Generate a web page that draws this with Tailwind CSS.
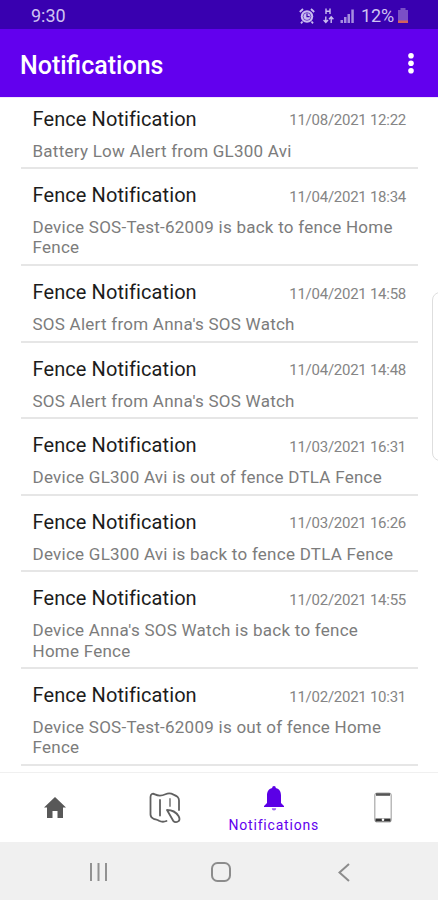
<!DOCTYPE html>
<html lang="en">
<head>
<meta charset="utf-8">
<title>Notifications</title>
<script src="https://cdn.jsdelivr.net/npm/@tailwindcss/browser@4"></script>
</head>
<body class="bg-white">
<div class="relative flex h-[900px] w-[438px] flex-col overflow-hidden bg-white font-[Roboto,sans-serif]">
  <div class="flex h-[29px] shrink-0 items-center justify-between bg-[#3900b0] pl-[31px] pr-[29px] pt-[2px] text-[#cfc3f2]">
    <span class="text-[18px] leading-[28px]">9:30</span>
    <div class="flex items-center">
      <svg class="mr-[8px]" width="16" height="16" viewBox="0 0 16 16" fill="none" stroke="#c9bcf0"><circle cx="8" cy="8.5" r="6.2" fill="#c9bcf0" stroke="none"/><path d="M.8 4 4 1M15.2 4 12 1M3.5 13.5 2 15.4M12.5 13.5l1.5 1.9" stroke-width="1.8"/><circle cx="8" cy="8.5" r="3.9" stroke="#3900b0" stroke-width=".6"/><path d="M8 5.5v3.2h2.6" stroke="#3900b0" stroke-width="1.2"/></svg>
      <svg class="mr-[6px]" width="11" height="16" viewBox="0 0 11 16" fill="none" stroke="#c9bcf0" stroke-width="1.4"><path d="M3 .5v5.5M7 .5v5.5M3 3.2h4M2.8 8.5v6M.6 12l2.2 2.4L5 12M8.2 15V9M6 11.2l2.2-2.4 2.2 2.4"/></svg>
      <svg class="mr-[6px]" width="15" height="16" viewBox="0 0 15 16" fill="#c9bcf0"><path opacity=".75" d="M.5 12h2.500v3H.5zM4 9h2.500v6H4z"/><path opacity=".75" d="M7.500 6H10v9H7.500z"/><path opacity=".75" d="M11.300 1.500h2.500V15h-2.500z"/></svg>
      <span class="mr-[3px] text-[18px] leading-[28px] tracking-[-0.1px]">12%</span>
      <svg width="12" height="16" viewBox="0 0 12 16"><path d="M3.5 0h5v2H11v11H1V2h2.500z" fill="#7a50c6"/><path d="M1 12.500h10V15H1z" fill="#d4605c"/></svg>
    </div>
  </div>
  <header class="flex h-[68px] shrink-0 items-center justify-between bg-[#6200ee] pl-[20px] pr-[24px] text-white">
    <h1 class="pt-[5px] text-[25px] font-medium leading-[28px]">Notifications</h1>
    <svg class="mt-[2px]" width="6" height="22" viewBox="0 0 6 22" fill="#fff"><circle cx="3" cy="2.800" r="2.800"/><circle cx="3" cy="10.300" r="2.800"/><circle cx="3" cy="17.800" r="2.800"/></svg>
  </header>
  <main class="min-h-0 flex-1 overflow-hidden border-t border-[#f0e6fc] pl-[21px] pr-[20px]">
    <ul id="list" class="-mt-[5.400px]"></ul>
  </main>
  <nav class="grid h-[70px] shrink-0 grid-cols-4 items-center border-t border-[#f0f0f0] bg-white">
    <div class="flex justify-center"><svg width="22" height="21" viewBox="0 0 22 21" fill="#585858"><path d="M11 0 22 10.500h-3V21h-5.500v-7h-5v7H3V10.500H0z"/></svg></div>
    <div class="flex justify-center pl-[1px]"><svg width="32" height="32" viewBox="0 0 32 32" fill="none" stroke="#606060" stroke-width="1.800" stroke-linecap="round" stroke-linejoin="round"><path d="M17.500 29c-3 1.200-5.500.8-7.500-.3-2-1.400-4-1.200-5.500-2C2.500 25.800 1.500 24.500 1.500 22.500V5c0-3 2.200-4 4.500-2.600 4 2 7.500 1.200 10.500-.2 2.500-1.100 5.500-1 8 .4 3.500 1.500 5.500 2.400 5.500 5.900V18M11 8v15.500"/><path d="M21 7v7" stroke="#8a8a8a"/><path d="M18 18c4 0 9 2 11.500 6 1 1.800 1.600 3.600.2 5-1.400 1.500-4 1.500-5.500-.2z"/></svg></div>
    <div class="flex flex-col items-center gap-[6px] pt-[3px] text-[#6200ee]">
      <svg width="20" height="25" viewBox="0 0 20 25" fill="#5b00e6"><path d="M10 0c1.200 0 1.800.8 1.800 2C15.600 2.800 17 6 17 9.500V17l3 3v1H0v-1l3-3V9.500C3 6 4.400 2.800 8.200 2c0-1.200.6-2 1.800-2z"/><path opacity=".6" d="M7.800 22.200h4.400a2.200 2.200 0 0 1-4.400 0z"/></svg>
      <span class="text-[14px] leading-[16px] tracking-[0.800px]">Notifications</span>
    </div>
    <div class="flex justify-center"><svg width="18" height="31" viewBox="0 0 18 31" fill="none"><rect x=".8" y="1" width="16.400" height="29" rx="2.500" stroke="#a9a9a9" stroke-width="1.200"/><path d="M2 2.500h14" stroke="#555" stroke-width="2.600"/><path d="M1.500 28h15" stroke="#333" stroke-width="3"/><circle cx="9" cy="27.700" r="1.300" fill="#fff"/></svg></div>
  </nav>
  <footer class="flex h-[58px] shrink-0 items-center bg-[#f0f0f0] pl-[89px] pt-[2px]">
    <svg class="mr-[103px]" width="19" height="18" viewBox="0 0 19 18" stroke="#929292" stroke-width="2"><path d="M2 0v18M9.500 0v18M17 0v18"/></svg>
    <svg class="mr-[107px]" width="20" height="20" viewBox="0 0 20 20" fill="none" stroke="#8c8c8c" stroke-width="2"><rect x="1" y="1" width="18" height="18" rx="5.500"/></svg>
    <svg width="12" height="19" viewBox="0 0 12 19" fill="none" stroke="#8c8c8c" stroke-width="2"><path d="M11 1 1.500 9.500 11 18"/></svg>
  </footer>
  <div class="absolute left-[432px] top-[292px] h-[169px] w-[20px] rounded-[8px] border-[1.500px] border-[#dedede] bg-white"></div>
</div>
<template id="row">
  <li class="border-b-2 border-[#e6e6e6] pb-[6.400px] pl-[11.500px] pr-[12px] pt-[14px]">
    <div class="flex h-[24px] items-center justify-between">
      <h2 class="text-[20px] leading-[24px] tracking-[0.090px] text-[#1c1c1c]"></h2>
      <time class="pt-[3px] text-[15px] leading-[20px] tracking-[-0.260px] text-[#858585]"></time>
    </div>
    <p class="mt-[10px] w-[370px] whitespace-pre-line text-[17px] leading-[20.200px] tracking-[0.250px] text-[#7c7c7c]"></p>
  </li>
</template>
<script>
const items = [
  ["11/08/2021 12:22", "Battery Low Alert from GL300 Avi"],
  ["11/04/2021 18:34", "Device SOS-Test-62009 is back to fence Home\nFence"],
  ["11/04/2021 14:58", "SOS Alert from Anna's SOS Watch"],
  ["11/04/2021 14:48", "SOS Alert from Anna's SOS Watch"],
  ["11/03/2021 16:31", "Device GL300 Avi is out of fence DTLA Fence"],
  ["11/03/2021 16:26", "Device GL300 Avi is back to fence DTLA Fence"],
  ["11/02/2021 14:55", "Device Anna's SOS Watch is back to fence\nHome Fence"],
  ["11/02/2021 10:31", "Device SOS-Test-62009 is out of fence Home\nFence"]
];
const tpl = document.getElementById("row"), list = document.getElementById("list");
for (const [when, text] of items) {
  const n = tpl.content.cloneNode(true);
  n.querySelector("h2").textContent = "Fence Notification";
  n.querySelector("time").textContent = when;
  n.querySelector("p").textContent = text;
  list.appendChild(n);
}
</script>
</body>
</html>
